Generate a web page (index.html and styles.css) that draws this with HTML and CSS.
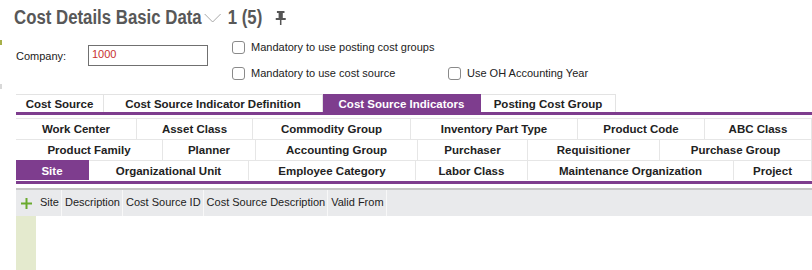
FILE: index.html
```html
<!DOCTYPE html>
<html lang="en">
<head>
    <meta charset="UTF-8">
    <meta name="viewport" content="width=device-width, initial-scale=1.0">
    <title>Cost Details Basic Data</title>
    <link rel="stylesheet" href="styles.css">
</head>
<body>
    <div class="edge-marks">
        <span class="mark mark-green"></span>
        <span class="mark mark-grey"></span>
    </div>

    <header class="title-bar">
        <div class="title">
            <h1>Cost Details Basic Data</h1>
            <svg class="chevron" width="21" height="10" viewBox="0 0 21 10">
                <path d="M1 1 L10.5 9 L20 1" fill="none" stroke="#a0a0a0" stroke-width="1"/>
            </svg>
            <span class="count">1 (5)</span>
            <svg class="pin" width="13" height="15" viewBox="0 0 13 15">
                <rect x="2" y="1" width="9" height="2" fill="#555"/>
                <rect x="4" y="3" width="5" height="5" fill="#555"/>
                <rect x="0.5" y="8" width="12" height="2" fill="#555"/>
                <rect x="5.6" y="10" width="1.8" height="5" fill="#555"/>
            </svg>
        </div>
    </header>

    <section class="form">
        <div class="company">
            <label for="company">Company:</label>
            <input type="text" id="company" value="1000">
        </div>
        <div class="options">
            <div class="option-row">
                <label class="check"><span class="box"></span>Mandatory to use posting cost groups</label>
            </div>
            <div class="option-row">
                <label class="check wide"><span class="box"></span>Mandatory to use cost source</label>
                <label class="check"><span class="box"></span>Use OH Accounting Year</label>
            </div>
        </div>
    </section>

    <nav class="tabs">
        <div class="tab">Cost Source</div>
        <div class="tab">Cost Source Indicator Definition</div>
        <div class="tab active">Cost Source Indicators</div>
        <div class="tab">Posting Cost Group</div>
    </nav>

    <div class="subtabs">
        <div class="subtab-row row-a">
            <div class="subtab">Work Center</div>
            <div class="subtab">Asset Class</div>
            <div class="subtab">Commodity Group</div>
            <div class="subtab">Inventory Part Type</div>
            <div class="subtab">Product Code</div>
            <div class="subtab">ABC Class</div>
        </div>
        <div class="subtab-row row-b">
            <div class="subtab">Product Family</div>
            <div class="subtab">Planner</div>
            <div class="subtab">Accounting Group</div>
            <div class="subtab">Purchaser</div>
            <div class="subtab">Requisitioner</div>
            <div class="subtab">Purchase Group</div>
        </div>
        <div class="subtab-row row-c">
            <div class="subtab active">Site</div>
            <div class="subtab">Organizational Unit</div>
            <div class="subtab">Employee Category</div>
            <div class="subtab">Labor Class</div>
            <div class="subtab">Maintenance Organization</div>
            <div class="subtab">Project</div>
        </div>
    </div>

    <div class="grid">
        <div class="grid-head">
            <div class="row-gutter">
                <svg width="11" height="11" viewBox="0 0 11 11">
                    <rect x="4.5" y="0" width="2" height="11" fill="#6aaa2e"/>
                    <rect x="0" y="4.5" width="11" height="2" fill="#6aaa2e"/>
                </svg>
            </div>
            <div class="col">Site</div>
            <div class="col">Description</div>
            <div class="col">Cost Source ID</div>
            <div class="col">Cost Source Description</div>
            <div class="col">Valid From</div>
        </div>
        <div class="grid-body">
            <div class="row-gutter"></div>
        </div>
    </div>
</body>
</html>
```

FILE: styles.css
```css
body {
    margin: 0;
    font-family: "Liberation Sans", Arial, sans-serif;
    font-size: 11px;
    color: #222;
    background-color: #fff;
    overflow: hidden;
}

.edge-marks {
    position: absolute;
    left: 0;
    top: 0;
}
.mark {
    position: absolute;
    left: 0;
    width: 2px;
    height: 5px;
}
.mark-green {
    top: 40px;
    background-color: #a7b04a;
}
.mark-grey {
    top: 84px;
    background-color: #d8d8d8;
}

.title-bar {
    height: 34px;
    padding-left: 14px;
    color: #585858;
}
/* the product font is a condensed face, squeeze the regular one */
.title {
    display: inline-flex;
    align-items: center;
    height: 34px;
    transform: scaleX(0.84);
    transform-origin: left center;
    white-space: nowrap;
}
.title h1,
.count {
    margin: 0;
    font-size: 20px;
    font-weight: bold;
}
.chevron {
    margin: 2px 7px 0 3px;
}
.pin {
    margin-left: 15px;
}

.form {
    display: flex;
    padding-left: 16px;
    height: 52px;
}
.company {
    display: flex;
    align-items: center;
    align-self: flex-start;
    margin-top: 11px;
    width: 216px;
}
.company label {
    width: 72px;
}
.company input {
    box-sizing: border-box;
    width: 120px;
    height: 21px;
    border: 1px solid #707070;
    padding: 0 3px 4px;
    font-family: "Liberation Sans", Arial, sans-serif;
    font-size: 11px;
    color: #c8312e;
}
.option-row {
    display: flex;
    align-items: center;
    height: 26px;
}
.check {
    display: flex;
    align-items: center;
}
.check.wide {
    width: 216px;
}
.box {
    box-sizing: border-box;
    width: 13px;
    height: 13px;
    margin-right: 6px;
    border: 1px solid #8a8a8a;
    border-radius: 3px;
    background-color: #fff;
}

.tabs {
    display: flex;
    margin: 8px 0 0 16px;
    border-bottom: 3px solid #7e3d8e;
}
.tab {
    display: flex;
    align-items: center;
    justify-content: center;
    box-sizing: border-box;
    height: 18px;
    border-top: 1px solid #e3e3e3;
    border-right: 1px solid #e3e3e3;
    font-size: 11.5px;
    font-weight: bold;
    color: #222;
}
.tab:nth-child(1) { width: 88px; }
.tab:nth-child(2) { width: 219px; }
.tab:nth-child(3) { width: 158px; }
.tab:nth-child(4) { width: 135px; }
.tab.active,
.subtab.active {
    background-color: #7e3d8e;
    border-color: #7e3d8e;
    color: #fff;
}

.subtabs {
    margin: 3px 0 0 16px;
    border-bottom: 3px solid #7e3d8e;
}
.subtab-row {
    display: grid;
    height: 21px;
}
.row-a { grid-template-columns: 121px 116px 158px 167px 127px 1fr; }
.row-b { grid-template-columns: 147px 93px 162px 110px 132px 1fr; }
.row-c { grid-template-columns: 73px 160px 167px 112px 206px 1fr; }
.subtab {
    display: flex;
    align-items: center;
    justify-content: center;
    border-top: 1px solid #e6e6e6;
    border-right: 1px solid #e6e6e6;
    font-size: 11.5px;
    font-weight: bold;
    white-space: nowrap;
}
.row-c .subtab {
    height: 19px;
}

.grid {
    margin: 4px 0 0 16px;
}
.grid-head {
    display: flex;
    height: 26px;
    background-color: #e9eaec;
    border-top: 2px solid #c6c6c6;
}
.row-gutter {
    display: flex;
    align-items: center;
    justify-content: center;
    width: 21px;
}
.col {
    display: flex;
    align-items: center;
    padding: 0 2px 2px 3px;
    border-right: 1px solid #f8f8f8;
    color: #222;
}
.grid-body {
    display: flex;
    height: 60px;
}
.grid-body .row-gutter {
    width: 20px;
    background-color: #e4eace;
}
```
